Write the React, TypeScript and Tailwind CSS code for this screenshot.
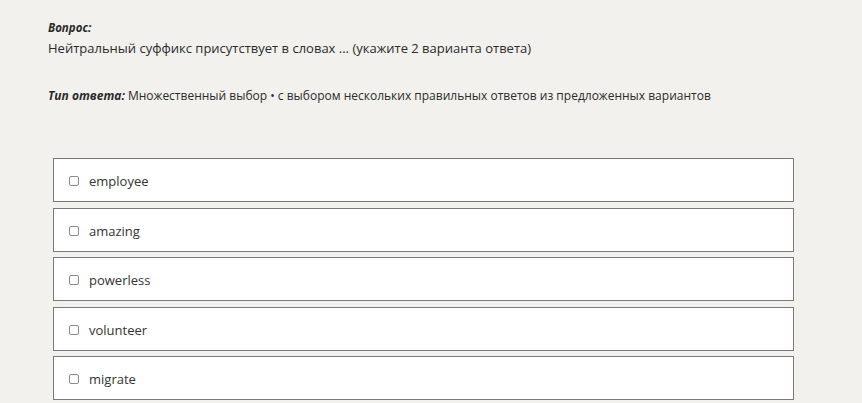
import React from "react";

const options = ["employee", "amazing", "powerless", "volunteer", "migrate"];

export default function App() {
  return (
    <div
      className="w-[862px] h-[403px] overflow-hidden bg-[#f2f1ee] text-[#2b2b2b] pl-[48px] pt-[18px]"
      style={{ fontFamily: '"Open Sans", "Noto Sans", sans-serif' }}
    >
      <p className="text-[11.5px] leading-[20px] font-bold italic">Вопрос:</p>
      <p className="text-[13px] leading-[20px]">
        Нейтральный суффикс присутствует в словах ... (укажите 2 варианта ответа)
      </p>
      <p className="mt-[28px] text-[12px] leading-[20px]">
        <span className="font-bold italic">Тип ответа:</span> Множественный выбор • с выбором нескольких правильных ответов из предложенных вариантов
      </p>
      <div className="mt-[52px] ml-[5px] w-[741px] flex flex-col gap-[5.5px]">
        {options.map((o) => (
          <div
            key={o}
            className="h-[44px] bg-white border border-[#7a7a7a] flex items-center pl-[15px] pt-[2px]"
          >
            <span className="w-[10px] h-[10px] border border-[#8a8a8a] rounded-[2px] bg-white" />
            <span className="ml-[10px] text-[13px] leading-[20px] text-[#333]">{o}</span>
          </div>
        ))}
      </div>
    </div>
  );
}
